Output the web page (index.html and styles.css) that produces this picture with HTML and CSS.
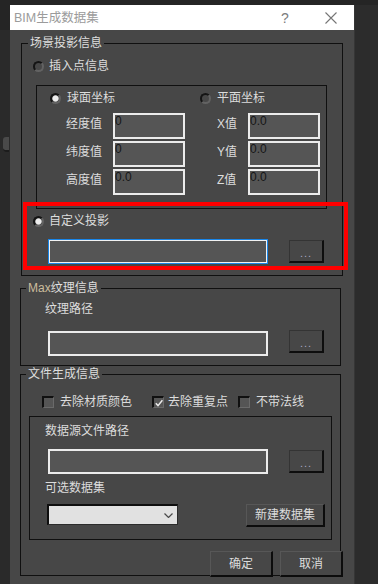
FILE: index.html
```html
<!DOCTYPE html>
<html lang="zh-CN">
<head>
    <meta charset="UTF-8">
    <meta name="viewport" content="width=device-width, initial-scale=1.0">
    <title>BIM生成数据集</title>
    <link rel="stylesheet" href="styles.css">
</head>
<body>

<div class="desktop">
    <div class="gutter"><span class="gutter-icon"></span></div>

    <div class="dialog">
        <div class="titlebar">
            <span class="title">BIM生成数据集</span>
            <span class="help">?</span>
            <span class="close">
                <svg width="12" height="12" viewBox="0 0 12 12"><path d="M0.5 0.5L11.5 11.5M11.5 0.5L0.5 11.5" stroke="#757575" stroke-width="1.1" fill="none"/></svg>
            </span>
        </div>

        <div class="dialog-body">
            <!-- 场景投影 -->
            <fieldset class="group group-scene">
                <legend>场景投影信息</legend>
                <div class="opt row-insert"><span class="radio"></span><span>插入点信息</span></div>

                <div class="subbox coords">
                    <div class="coord-head">
                        <div class="opt opt-sphere"><span class="radio on"></span><span>球面坐标</span></div>
                        <div class="opt"><span class="radio"></span><span>平面坐标</span></div>
                    </div>
                    <div class="coord-row">
                        <span class="lbl lbl-left">经度值</span><div class="field">0</div>
                        <span class="lbl lbl-right">X值</span><div class="field">0.0</div>
                    </div>
                    <div class="coord-row">
                        <span class="lbl lbl-left">纬度值</span><div class="field">0</div>
                        <span class="lbl lbl-right">Y值</span><div class="field">0.0</div>
                    </div>
                    <div class="coord-row">
                        <span class="lbl lbl-left">高度值</span><div class="field">0.0</div>
                        <span class="lbl lbl-right">Z值</span><div class="field">0.0</div>
                    </div>
                </div>

                <div class="opt row-custom"><span class="radio on"></span><span>自定义投影</span></div>
                <div class="path-row custom-path">
                    <div class="field wide focused"></div>
                    <div class="btn dots">...</div>
                </div>
            </fieldset>

            <!-- 纹理 -->
            <fieldset class="group group-tex">
                <legend><span class="max">Max</span>纹理信息</legend>
                <div class="plain-label tex-label">纹理路径</div>
                <div class="path-row tex-path">
                    <div class="field wide"></div>
                    <div class="btn dots">...</div>
                </div>
            </fieldset>

            <!-- 文件生成 -->
            <fieldset class="group group-file">
                <legend>文件生成信息</legend>
                <div class="checks">
                    <div class="chk chk-1"><span class="check"></span><span>去除材质颜色</span></div>
                    <div class="chk chk-2"><span class="check">
                        <svg width="8" height="8" viewBox="0 0 8 8"><path d="M0.8 4.2L3 6.6L7.4 1.2" stroke="#ececec" stroke-width="1.5" fill="none"/></svg>
                    </span><span>去除重复点</span></div>
                    <div class="chk chk-3"><span class="check"></span><span>不带法线</span></div>
                </div>

                <div class="subbox source">
                    <div class="plain-label">数据源文件路径</div>
                    <div class="path-row src-path">
                        <div class="field wide"></div>
                        <div class="btn dots">...</div>
                    </div>
                    <div class="plain-label set-label">可选数据集</div>
                    <div class="set-row">
                        <div class="combo">
                            <svg width="9" height="5" viewBox="0 0 9 5"><path d="M0.5 0.5L4.5 4.5L8.5 0.5" stroke="#4a4a4a" stroke-width="1.2" fill="none"/></svg>
                        </div>
                        <div class="btn new-set">新建数据集</div>
                    </div>
                </div>
            </fieldset>

            <div class="actions">
                <div class="btn action">确定</div>
                <div class="btn action">取消</div>
            </div>
        </div>

        <div class="mark"></div>
    </div>
</div>

</body>
</html>
```

FILE: styles.css
```css
body {
    margin: 0;
    background: #252525;
    font-family: 'Liberation Sans', 'Noto Sans CJK SC', sans-serif;
    font-size: 12px;
    line-height: 14px;
    color: #dcdcdc;
}

.desktop {
    display: flex;
    padding-top: 5px;
    height: 579px;
    overflow: hidden;
}

.gutter {
    width: 10px;
    margin-top: 25px;
    background: #2a2a2a;
}

.gutter-icon {
    display: block;
    width: 6px;
    height: 13px;
    margin: 107px 0 0 3px;
    background: #4a4a4a;
    border-radius: 3px 0 0 4px;
    border-bottom: 2px solid #1c1c1c;
}

.dialog {
    position: relative;
    width: 344px;
    background: #474747;
    box-shadow: 1px 0 0 #363636, 24px 0 0 #2c2c2c;
}

/* title bar */
.titlebar {
    display: flex;
    align-items: center;
    height: 25px;
    background: #ffffff;
    padding: 0 17px 0 4px;
}

.title {
    flex: 1;
    color: #9b9b9b;
    font-size: 12.5px;
}

.help {
    width: 12px;
    text-align: center;
    color: #7c7c7c;
    font-size: 14px;
    margin-right: 34px;
}

.close {
    display: flex;
}

/* group boxes */
.group {
    margin: 0;
    padding: 0;
    min-width: 0;
    border: 1px solid #101010;
}

.group legend {
    padding: 0 2px;
    font-size: 12px;
    line-height: 14px;
    color: #dedede;
}

.group-scene {
    margin: 6px 11px 0 11px;
    padding-bottom: 11px;
}

.group-scene legend {
    margin-left: 6px;
}

.group-tex {
    margin: 5px 13px 0 10px;
    padding-bottom: 9px;
}

.group-tex legend,
.group-file legend {
    margin-left: 5px;
}

.max {
    color: #cbbc9c;
}

.group-file {
    margin: 1px 13px 0 10px;
    padding-bottom: 35px;
}

.subbox {
    border: 1px solid #101010;
}

/* radio / options */
.opt {
    display: flex;
    align-items: center;
    height: 14px;
}

.radio {
    box-sizing: border-box;
    width: 11px;
    height: 11px;
    margin-right: 5px;
    border-radius: 50%;
    border: 2px solid;
    border-color: #141414 #626262 #626262 #141414;
    background: #474747;
}

.radio.on {
    background: radial-gradient(circle, #ececec 0, #ececec 2.6px, #9a9a9a 3.2px, #474747 3.6px);
}

.row-insert {
    margin-top: 9px;
    padding-left: 11px;
}

.coords {
    margin: 12px 15px 0 14px;
    padding: 5px 0 13px 13px;
}

.coord-head {
    display: flex;
}

.coord-head .radio {
    margin-right: 6px;
}

.opt-sphere {
    width: 150px;
}

.coord-row {
    display: flex;
    align-items: flex-start;
    margin-top: 2px;
}

.coord-head + .coord-row {
    margin-top: 8px;
}

.lbl {
    padding-top: 4px;
}

.lbl-left {
    width: 47px;
    margin-left: 16px;
}

.lbl-right {
    width: 31px;
    margin-left: 32px;
}

/* text fields */
.field {
    box-sizing: border-box;
    width: 72px;
    height: 26px;
    background: #555555;
    border: 2px solid #ececec;
    color: #161616;
    font-size: 12px;
    line-height: 13px;
}

.field.wide {
    width: 220px;
    height: 25px;
}

.field.focused {
    border: 1px solid #1a86e8;
    box-shadow: inset 0 0 0 1px #f2f2f2;
}

.row-custom {
    margin-top: 5px;
    padding-left: 11px;
}

.path-row {
    display: flex;
    align-items: flex-start;
}

.custom-path {
    margin-top: 11px;
    padding-left: 26px;
}

/* buttons */
.btn {
    box-sizing: border-box;
    display: flex;
    align-items: center;
    justify-content: center;
    background: #474747;
    border-style: solid;
    border-width: 1px 2px 2px 1px;
    border-color: #575757 #0c0c0c #0c0c0c #575757;
    color: #dcdcdc;
}

.dots {
    width: 35px;
    height: 23px;
    margin: 1px 0 0 21px;
    padding-top: 3px;
    border-color: #343434 #0e0e0e #0e0e0e #343434;
    color: #a8a8c4;
    font-size: 11px;
    letter-spacing: 1px;
}

.plain-label {
    height: 14px;
}

.tex-label {
    margin-top: 7px;
    padding-left: 24px;
}

.tex-path {
    margin-top: 15px;
    padding-left: 27px;
}

.tex-path .dots {
    margin-top: -1px;
}

/* check boxes */
.checks {
    display: flex;
    align-items: center;
    height: 14px;
    margin-top: 14px;
    padding-left: 21px;
}

.chk {
    display: flex;
    align-items: center;
}

.chk-1 {
    width: 110px;
}

.chk-2 {
    width: 86px;
}

.check {
    box-sizing: border-box;
    display: flex;
    align-items: center;
    justify-content: center;
    width: 12px;
    height: 12px;
    margin-right: 6px;
    background: #555555;
    border-style: solid;
    border-width: 2px 1px 1px 2px;
    border-color: #101010 #6a6a6a #6a6a6a #101010;
}

.chk-2 .check {
    margin-right: 4px;
}

.source {
    margin: 7px 8px 0 8px;
    padding: 7px 0 12px 15px;
}

.src-path {
    margin-top: 11px;
    padding-left: 3px;
}

.set-label {
    margin-top: 7px;
}

.set-row {
    display: flex;
    align-items: flex-start;
    margin-top: 9px;
    padding-left: 2px;
}

.combo {
    box-sizing: border-box;
    display: flex;
    align-items: center;
    justify-content: flex-end;
    width: 131px;
    height: 21px;
    padding-right: 4px;
    background: #e1e1e1;
    border-style: solid;
    border-width: 2px 1px 1px 2px;
    border-color: #0e0e0e #2c2c2c #2c2c2c #0e0e0e;
}

.new-set {
    width: 79px;
    height: 23px;
    margin-left: 68px;
}

.actions {
    display: flex;
    justify-content: flex-end;
    gap: 7px;
    margin-top: -25px;
    padding-right: 11px;
}

.action {
    width: 63px;
    height: 26px;
}

/* red annotation frame */
.mark {
    position: absolute;
    left: 13px;
    top: 197px;
    width: 325px;
    height: 68px;
    box-sizing: border-box;
    border: 4px solid #ff0000;
}
```
